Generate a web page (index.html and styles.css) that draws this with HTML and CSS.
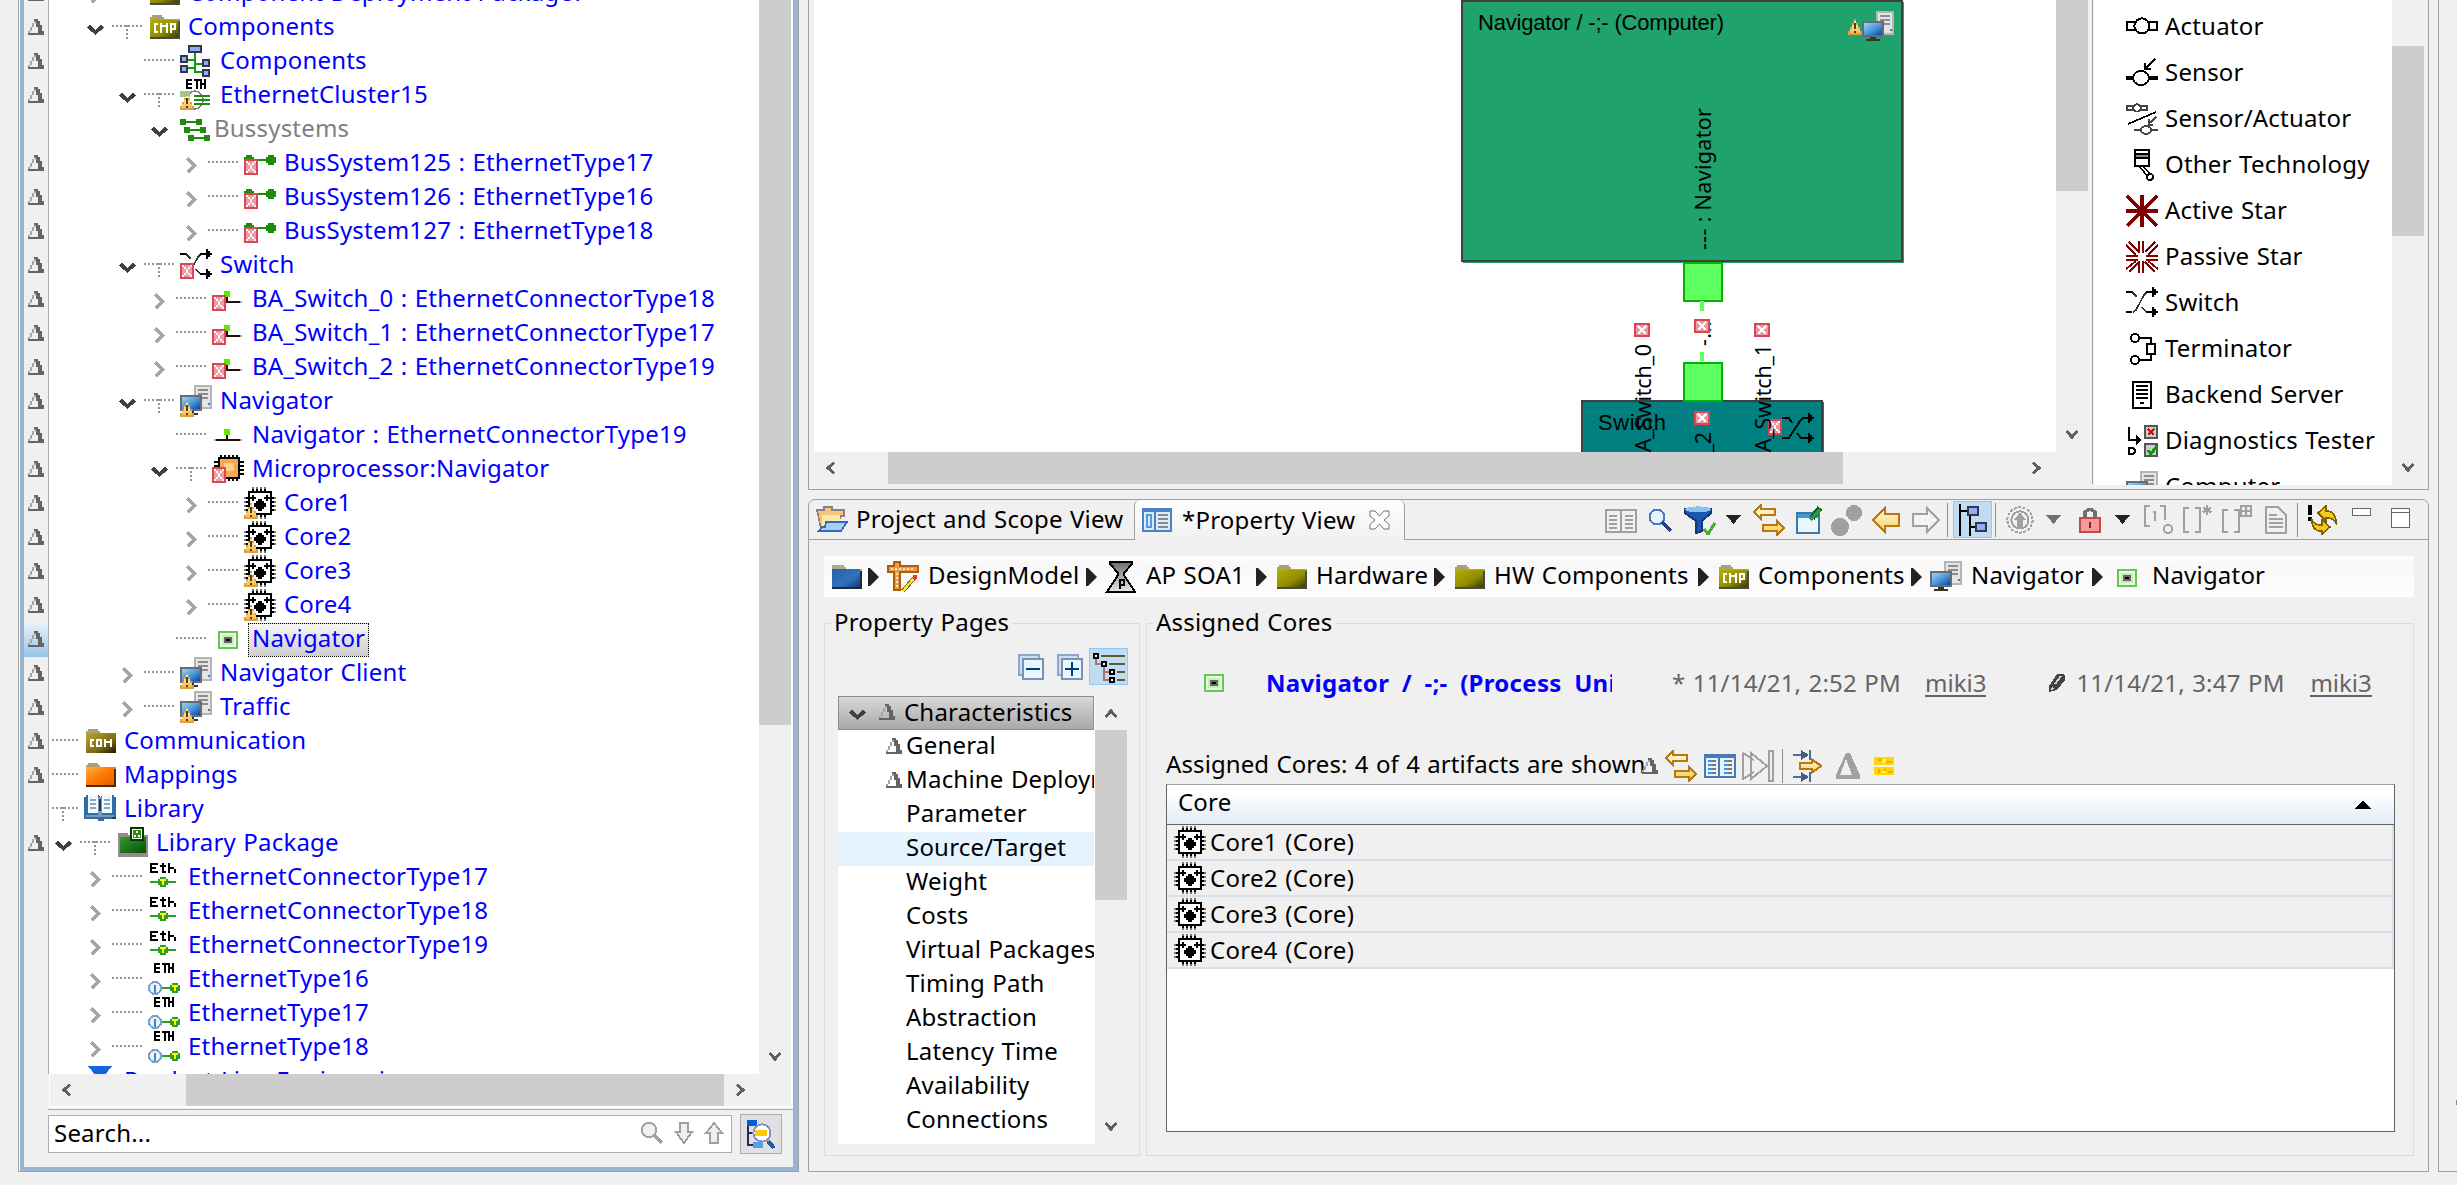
FILE: index.html
```html
<!DOCTYPE html>
<html lang="en">
<head>
<meta charset="utf-8">
<title>Property View</title>
<link rel="stylesheet" href="styles.css">
</head>
<body>
<svg class="sprite" width="0" height="0" aria-hidden="true">
  <defs>
    <linearGradient id="g-olive" x2="1" y2="1"><stop offset="0" stop-color="#b4b000"/><stop offset=".6" stop-color="#8f8c00"/><stop offset="1" stop-color="#3c3a00"/></linearGradient>
    <linearGradient id="g-khaki" x2="1" y2="1"><stop offset="0" stop-color="#bfa52c"/><stop offset=".6" stop-color="#7f6c14"/><stop offset="1" stop-color="#1c1600"/></linearGradient>
    <linearGradient id="g-orange" x2="1" y2="1"><stop offset="0" stop-color="#ffb347"/><stop offset=".5" stop-color="#ff7a00"/><stop offset="1" stop-color="#e06000"/></linearGradient>
    <linearGradient id="g-green" x2="1" y2="1"><stop offset="0" stop-color="#2f9e2f"/><stop offset="1" stop-color="#045004"/></linearGradient>
    <linearGradient id="g-blue" x2="1" y2="1"><stop offset="0" stop-color="#2a5fa4"/><stop offset=".6" stop-color="#2f74bd"/><stop offset="1" stop-color="#103a70"/></linearGradient>
    <linearGradient id="g-screen" x2="1" y2="1"><stop offset="0" stop-color="#9fd0f2"/><stop offset=".5" stop-color="#4f9bdc"/><stop offset="1" stop-color="#0846a8"/></linearGradient>
    <linearGradient id="g-warn" x2="0" y2="1"><stop offset="0" stop-color="#fff0bc"/><stop offset="1" stop-color="#f8bc58"/></linearGradient>
    <linearGradient id="g-gold" x2="0" y2="1"><stop offset="0" stop-color="#fffbe8"/><stop offset="1" stop-color="#f5cf5c"/></linearGradient>
    <linearGradient id="g-gray" x2="0" y2="1"><stop offset="0" stop-color="#6c6c6c"/><stop offset="1" stop-color="#e8e8e8"/></linearGradient>
  </defs>
  <symbol id="error" viewBox="0 0 7 8"><path fill="#dc4553" d="M0 0h7v8H0z"/><path fill="#eb9aa1" d="M1 1h5v6H1z"/><path fill="#fff" d="M2 2h1v1H2zM4 2h1v1H4zM3 3h1v2H3zM2 5h1v1H2zM4 5h1v1H4zM1 1h1v1H1zM5 1h1v1H5zM1 6h1v1H1zM5 6h1v1H5z"/></symbol>
  <symbol id="warn" viewBox="0 0 7 8"><path fill="#dca040" d="M3 0h1v2h1v2h1v2h1v2H0V6h1V4h1V2h1z"/><path fill="url(#g-warn)" d="M3 1h1v2h1v2h1v2H1V5h1V3h1z"/><path fill="#5c3a00" d="M3 2h1v3H3zM3 6h1v1H3z"/></symbol>
  <symbol id="delta" viewBox="0 0 8 8"><path fill="#646464" d="M3 0h2v1h1v2h1v3h1v2H0V7h5V4H4V1H3z"/><path fill="#a4a4a4" d="M3 1h1v1H3zM2 2h1v2H2zM1 4h1v2H1zM0 6h1v1H0z"/></symbol>
  <symbol id="open" viewBox="0 0 17 11"><path fill="none" stroke="#404040" stroke-width="4" d="M1.500 2 8.500 8.500 15.500 2"/></symbol>
  <symbol id="closed" viewBox="0 0 11 17"><path fill="none" stroke="#a5a5a5" stroke-width="3.600" d="M1.500 1.500 8.500 8.500 1.500 15.500"/></symbol>
  <symbol id="folder" viewBox="0 0 16 16"><path fill="#a8a078" d="M2 2h5v1h1v1h8v2H1V3h1z"/><path fill="#4a4a44" d="M15 5h1v9H1v-1h14z"/><path fill="url(#g-olive)" d="M1 4.500h14V13H1z"/></symbol>
  <symbol id="cmp" viewBox="0 0 16 16"><use href="#folder"/><path fill="none" stroke="#fff" d="M5 6.500H3.500v4H5M6.500 11V6M7 7.500h2M9.500 11V6M11.500 11V6.500h2v2.500h-2"/></symbol>
  <symbol id="com" viewBox="0 0 16 16"><path fill="#a8a078" d="M2 2h5v1h1v1h8v2H1V3h1z"/><path fill="url(#g-khaki)" d="M1 4h15v10H1z"/><path fill="none" stroke="#fff" d="M5 7.500H3.500v3H5M6.500 7.500h2v3h-2zM10.500 11V7M11 8.500h2M13.500 11V7"/></symbol>
  <symbol id="mapfolder" viewBox="0 0 16 16"><path fill="#b59a72" d="M2 2h5v1h1v1h8v2H1V3h1z"/><path fill="url(#g-orange)" d="M1 4h14v9H1z"/><path fill="#4c2c00" d="M1 13h14V5h1v9H1z"/></symbol>
  <symbol id="bluefolder" viewBox="0 0 16 16"><path fill="#b0a890" d="M1 2h6v1h1v1h8v2H1z"/><path fill="url(#g-blue)" d="M1 4h14v9H1z"/><path fill="#1c2c40" d="M1 13h14V5h1v9H1z"/></symbol>
  <symbol id="package" viewBox="0 0 16 16"><path fill="#988" d="M1 3h5v1h10v11H1z"/><path fill="url(#g-green)" d="M2 5h13v8H2z"/><path fill="#063806" d="M7 0h7v7H7z"/><path fill="#fff" d="M8 1h5v5H8z"/><path fill="#2c8c10" d="M8.500 1.500h4v4h-4z"/><path fill="#fff" d="M10 2h1v1h-1zM9 4h1v1H9zM11 4h1v1h-1z"/></symbol>
  <symbol id="library" viewBox="0 0 16 16"><path fill="#2e6ea8" d="M0 2h1V1h6l1 1 1-1h6v1h1v11h-6v1H7v-1H0z"/><path fill="#f4f8fc" d="M2 1h5v9H2zM9 1h5v9H9z"/><path fill="#7c98b4" d="M7 2h2v9H7zM1 11h14v1H1z"/><path fill="#87a8c8" d="M3 3h3v1H3zM3 5h3v1H3zM3 7h3v1H3zM10 3h3v1h-3zM10 5h3v1h-3zM10 7h3v1h-3z"/><path fill="#123a66" d="M7.500 3h1v6h-1zM14 12h2v1h-2z"/></symbol>
  <symbol id="hierarchy" viewBox="0 0 16 16"><path fill="none" stroke="#139b13" d="M7.500 4v10M4 7.500h4M4 11.500h4M8 9.500h4M8 13.500h4"/><g fill="#94a8ff" stroke="#333740"><path d="M4.500.5h6v3h-6zM.5 5.500h3v3h-3zM.5 10.500h3v3h-3zM11.500 7.500h3v3h-3zM11.500 12.500h3v3h-3z"/></g></symbol>
  <symbol id="cluster" viewBox="0 0 16 16"><path fill="none" stroke="#000" d="M3.500 5V.5M3 .5h3M4 2.500h2M3 4.500h3M7 .5h3M8.500 0v5M10.500 0v5M12.500 0v5M11 2.500h1"/><ellipse cx="7.500" cy="10.500" rx="4" ry="4.500" fill="#fff" stroke="#777" stroke-width=".8"/><path fill="#9fc890" d="M0 6h5v3H0z"/><path fill="#1a8a10" d="M7 8h8v1H7zM7 10h8v1H7zM7 12h8v1H7z"/><use href="#warn" y="7.500" width="7" height="8"/></symbol>
  <symbol id="buses" viewBox="0 0 16 16"><path fill="#1e8c0a" d="M0 3h3v1h5V3h3v3H8V5H3v1H0zM2 7h3v1h5V7h3v3h-3V9H5v1H2zM4 11h3v1h5v-1h3v3h-3v-1H7v1H4z"/></symbol>
  <symbol id="bus" viewBox="0 0 16 16"><path fill="#1e8c0a" d="M1 4h3v1h1v1h6V5h1V4h3v1h1v3h-1v1h-3V8h-1V7H5v1H0V5h1z"/><use href="#error" y="6" width="7" height="8"/></symbol>
  <symbol id="switch" viewBox="0 0 16 16"><path fill="none" stroke="#333" stroke-width=".8" d="M3 2.500 5.500 5M3.500 12.500 5 11.500 9 4l1.500-1.500M8 10l2 2.500"/><path fill="none" stroke="#000" d="M0 2.500h3M10 2.500h4M0 12.500h3M10 12.500h4"/><path d="M13 0h1v1h1v1h1v1h-1v1h-1v1h-1zM13 10h1v1h1v1h1v1h-1v1h-1v1h-1z"/></symbol>
  <symbol id="switch-error" viewBox="0 0 16 16"><use href="#switch" y="0" width="16" height="16"/><use href="#error" y="7" width="7" height="8"/></symbol>
  <symbol id="connector" viewBox="0 0 16 16"><path fill="#201008" d="M2 10h12v1H2zM7 8h1v2H7z"/><path fill="#aaa" d="M1 10h1v1H1zM14 10h1v1h-1z"/><path fill="#64e600" d="M6 5h3v3H6z"/></symbol>
  <symbol id="connector-error" viewBox="0 0 16 16"><use href="#connector" y="-1" width="16" height="16"/><use href="#error" y="6" width="7" height="8"/></symbol>
  <symbol id="computer" viewBox="0 0 16 16"><path fill="#b4b4b4" d="M7 0h9v12H7z"/><path fill="#e4e4e4" d="M8 1h7v10H8z"/><path fill="#8c8c8c" d="M9 2h5v1H9zM9 4h5v1H9zM9 6h5v1H9z"/><path fill="#2a86d8" d="M14 9h1v1h-1z"/><path fill="#666c74" d="M0 5h11v8H0z"/><path fill="url(#g-screen)" d="M1 6h9v6H1z"/><path fill="#333" d="M4 13h3v1H4zM2 14h7v1H2z"/></symbol>
  <symbol id="computer-warn" viewBox="0 0 16 16"><use href="#computer" width="16" height="16"/><use href="#warn" y="8" width="7" height="8"/></symbol>
  <symbol id="micro" viewBox="0 0 16 16"><path d="M4 1h1v2H4zM6 1h1v2H6zM8 1h1v2H8zM10 1h1v2h-1zM12 1h1v2h-1zM6 12h1v2H6zM8 12h1v2H8zM10 12h1v2h-1zM12 12h1v2h-1zM1 4h15v1H1zM1 6h15v1H1zM1 8h15v1H1zM1 10h15v1H1zM3 2h11v11H3z"/><path fill="#f6a84c" d="M4 3h9v9H4z"/><path fill="#ffd08c" d="M6 5h5v4H6z"/><use href="#error" y="7" width="7" height="8"/></symbol>
  <symbol id="core" viewBox="0 0 16 16"><path fill="#777" d="M0 5h16v1H0zM0 7h16v1H0zM0 9h16v1H0zM0 11h16v1H0zM4 0h1v16H4zM6 0h1v16H6zM8 0h1v16H8zM10 0h1v16h-1z"/><path d="M1 5h14v1H1zM1 7h14v1H1zM1 9h14v1H1zM1 11h14v1H1zM4 1h1v14H4zM6 1h1v14H6zM8 1h1v14H8zM10 1h1v14h-1zM2 2h12v12H2z"/><path fill="#fff" d="M3 3h10v10H3z"/><path d="M2 5h4v1H2zM4 4h1v3H4zM10 5h4v1h-4zM11 4h1v3h-1zM7 6h2v1h1v1h1v2h-1v1H9v1H7v-1H6v-1H5V8h1V7h1z"/></symbol>
  <symbol id="core-warn" viewBox="0 0 16 16"><use href="#core" width="16" height="16"/><use href="#warn" y="8" width="7" height="8"/></symbol>
  <symbol id="process" viewBox="0 0 16 16"><path fill="#64c855" d="M3 4h10v9H3z"/><path fill="#e8ffe0" d="M4 5h8v7H4z"/><path fill="#c4eeb8" d="M5 6h6v5H5z"/><path fill="#666" d="M6 7h4v3H6z"/><path d="M7 8h2v1H7z"/></symbol>
  <symbol id="ethconn" viewBox="0 0 16 16"><path fill="none" stroke="#000" d="M5 1.500H1.500v4H5M2 3.500h2M6 2.500h3M7.500 1v4.500h1.500M10.500 1v5M11 3.500h2M13.500 4v2"/><path fill="#2c9c2c" d="M1 10h13v1H1zM6 8h3v1h1v3H9v1H6v-1H5V9h1z"/><path fill="#ff0" d="M6 9h3v1H8v2H7v-2H6z"/></symbol>
  <symbol id="ethtype" viewBox="0 0 16 16"><path fill="none" stroke="#000" d="M3.500 5V.5M3 .5h3M4 2.500h2M3 4.500h3M7 .5h3M8.500 0v5M10.500 0v5M12.500 0v5M11 2.500h1"/><ellipse cx="3.500" cy="12.500" rx="3" ry="3" fill="#e8f2fa" stroke="#78a4cc"/><path fill="#4c84b8" d="M3 11h1v4H3z"/><path fill="#2c9c2c" d="M7 12h5v1H7zM12 10h3v1h1v3h-1v1h-3v-1h-1v-3h1z"/><path fill="#ff0" d="M12 11h3v1h-1v2h-1v-2h-1z"/></symbol>
  <symbol id="arrows" viewBox="0 0 16 16"><path fill="url(#g-gold)" stroke="#b8780c" stroke-width=".9" d="M.6 4 4 .6v2h7v2.800H4v2zM15.400 12 12 8.600v2H5v2.800h7v2z"/></symbol>
  <symbol id="table" viewBox="0 0 16 16"><path fill="#4c78b8" d="M0 2h16v12H0z"/><path fill="#e8f2fb" d="M1 4h6v9H1zM8 4h7v9H8z"/><path fill="#3c92e8" d="M2 5h2v1H2zM2 7h2v1H2zM2 9h2v1H2zM2 11h2v1H2zM10 5h2v1h-2zM10 7h2v1h-2zM10 9h2v1h-2zM10 11h2v1h-2z"/><path fill="#777" d="M4 5h2v1H4zM4 7h2v1H4zM4 9h2v1H4zM4 11h2v1H4zM12 5h2v1h-2zM12 7h2v1h-2zM12 9h2v1h-2zM12 11h2v1h-2z"/></symbol>
  <symbol id="tri" viewBox="0 0 15 9"><path d="M0 0h15L7.500 9z" fill="currentColor"/></symbol>
  <symbol id="crumb" viewBox="0 0 11 18"><path fill="#222" d="M0 0h2l9 9-9 9H0z"/></symbol>
  <symbol id="s-left" viewBox="0 0 9 12"><path fill="none" stroke="#606060" stroke-width="3" d="M8 .5 2 6l6 5.500"/></symbol>
  <symbol id="s-right" viewBox="0 0 9 12"><path fill="none" stroke="#606060" stroke-width="3" d="M1 .5 7 6l-6 5.500"/></symbol>
  <symbol id="s-down" viewBox="0 0 12 9"><path fill="none" stroke="#606060" stroke-width="3" d="M.5 1 6 7l5.500-6"/></symbol>
  <symbol id="s-up" viewBox="0 0 12 9"><path fill="none" stroke="#606060" stroke-width="3" d="M.5 8 6 2l5.500 6"/></symbol>
</svg>

<div class="workbench">
  <section class="navigator">
    <div class="treeframe">
      <ul class="tree">
        <li class="row l2"><svg class="mark"><use href="#delta"/></svg><svg class="chev shut"><use href="#closed"/></svg><i class="dots"></i><svg class="ico"><use href="#folder"/></svg><span>Component Deployment Package7</span></li>
        <li class="row l2"><svg class="mark"><use href="#delta"/></svg><svg class="chev"><use href="#open"/></svg><i class="dots tee"></i><svg class="ico"><use href="#cmp"/></svg><span>Components</span></li>
        <li class="row l3"><svg class="mark"><use href="#delta"/></svg><svg class="chev"></svg><i class="dots"></i><svg class="ico"><use href="#hierarchy"/></svg><span>Components</span></li>
        <li class="row l3"><svg class="mark"><use href="#delta"/></svg><svg class="chev"><use href="#open"/></svg><i class="dots tee"></i><svg class="ico"><use href="#cluster"/></svg><span>EthernetCluster15</span></li>
        <li class="row l4 group"><svg class="mark"></svg><svg class="chev"><use href="#open"/></svg><svg class="ico"><use href="#buses"/></svg><span>Bussystems</span></li>
        <li class="row l5"><svg class="mark"><use href="#delta"/></svg><svg class="chev shut"><use href="#closed"/></svg><i class="dots"></i><svg class="ico"><use href="#bus"/></svg><span>BusSystem125 : EthernetType17</span></li>
        <li class="row l5"><svg class="mark"><use href="#delta"/></svg><svg class="chev shut"><use href="#closed"/></svg><i class="dots"></i><svg class="ico"><use href="#bus"/></svg><span>BusSystem126 : EthernetType16</span></li>
        <li class="row l5"><svg class="mark"><use href="#delta"/></svg><svg class="chev shut"><use href="#closed"/></svg><i class="dots"></i><svg class="ico"><use href="#bus"/></svg><span>BusSystem127 : EthernetType18</span></li>
        <li class="row l3"><svg class="mark"><use href="#delta"/></svg><svg class="chev"><use href="#open"/></svg><i class="dots tee"></i><svg class="ico"><use href="#switch-error"/></svg><span>Switch</span></li>
        <li class="row l4"><svg class="mark"><use href="#delta"/></svg><svg class="chev shut"><use href="#closed"/></svg><i class="dots"></i><svg class="ico"><use href="#connector-error"/></svg><span>BA_Switch_0 : EthernetConnectorType18</span></li>
        <li class="row l4"><svg class="mark"><use href="#delta"/></svg><svg class="chev shut"><use href="#closed"/></svg><i class="dots"></i><svg class="ico"><use href="#connector-error"/></svg><span>BA_Switch_1 : EthernetConnectorType17</span></li>
        <li class="row l4"><svg class="mark"><use href="#delta"/></svg><svg class="chev shut"><use href="#closed"/></svg><i class="dots"></i><svg class="ico"><use href="#connector-error"/></svg><span>BA_Switch_2 : EthernetConnectorType19</span></li>
        <li class="row l3"><svg class="mark"><use href="#delta"/></svg><svg class="chev"><use href="#open"/></svg><i class="dots tee"></i><svg class="ico"><use href="#computer-warn"/></svg><span>Navigator</span></li>
        <li class="row l4"><svg class="mark"><use href="#delta"/></svg><svg class="chev"></svg><i class="dots"></i><svg class="ico"><use href="#connector"/></svg><span>Navigator : EthernetConnectorType19</span></li>
        <li class="row l4"><svg class="mark"><use href="#delta"/></svg><svg class="chev"><use href="#open"/></svg><i class="dots tee"></i><svg class="ico"><use href="#micro"/></svg><span>Microprocessor:Navigator</span></li>
        <li class="row l5"><svg class="mark"><use href="#delta"/></svg><svg class="chev shut"><use href="#closed"/></svg><i class="dots"></i><svg class="ico"><use href="#core-warn"/></svg><span>Core1</span></li>
        <li class="row l5"><svg class="mark"><use href="#delta"/></svg><svg class="chev shut"><use href="#closed"/></svg><i class="dots"></i><svg class="ico"><use href="#core-warn"/></svg><span>Core2</span></li>
        <li class="row l5"><svg class="mark"><use href="#delta"/></svg><svg class="chev shut"><use href="#closed"/></svg><i class="dots"></i><svg class="ico"><use href="#core-warn"/></svg><span>Core3</span></li>
        <li class="row l5"><svg class="mark"><use href="#delta"/></svg><svg class="chev shut"><use href="#closed"/></svg><i class="dots"></i><svg class="ico"><use href="#core-warn"/></svg><span>Core4</span></li>
        <li class="row l4 selected"><svg class="mark"><use href="#delta"/></svg><svg class="chev"></svg><i class="dots"></i><svg class="ico"><use href="#process"/></svg><span>Navigator</span></li>
        <li class="row l3"><svg class="mark"><use href="#delta"/></svg><svg class="chev shut"><use href="#closed"/></svg><i class="dots"></i><svg class="ico"><use href="#computer-warn"/></svg><span>Navigator Client</span></li>
        <li class="row l3"><svg class="mark"><use href="#delta"/></svg><svg class="chev shut"><use href="#closed"/></svg><i class="dots"></i><svg class="ico"><use href="#computer-warn"/></svg><span>Traffic</span></li>
        <li class="row l0"><svg class="mark"><use href="#delta"/></svg><i class="dots"></i><svg class="ico"><use href="#com"/></svg><span>Communication</span></li>
        <li class="row l0"><svg class="mark"><use href="#delta"/></svg><i class="dots"></i><svg class="ico"><use href="#mapfolder"/></svg><span>Mappings</span></li>
        <li class="row l0"><svg class="mark"></svg><i class="dots tee"></i><svg class="ico"><use href="#library"/></svg><span>Library</span></li>
        <li class="row l1"><svg class="mark"><use href="#delta"/></svg><svg class="chev"><use href="#open"/></svg><i class="dots tee"></i><svg class="ico"><use href="#package"/></svg><span>Library Package</span></li>
        <li class="row l2"><svg class="mark"></svg><svg class="chev shut"><use href="#closed"/></svg><i class="dots"></i><svg class="ico"><use href="#ethconn"/></svg><span>EthernetConnectorType17</span></li>
        <li class="row l2"><svg class="mark"></svg><svg class="chev shut"><use href="#closed"/></svg><i class="dots"></i><svg class="ico"><use href="#ethconn"/></svg><span>EthernetConnectorType18</span></li>
        <li class="row l2"><svg class="mark"></svg><svg class="chev shut"><use href="#closed"/></svg><i class="dots"></i><svg class="ico"><use href="#ethconn"/></svg><span>EthernetConnectorType19</span></li>
        <li class="row l2"><svg class="mark"></svg><svg class="chev shut"><use href="#closed"/></svg><i class="dots"></i><svg class="ico"><use href="#ethtype"/></svg><span>EthernetType16</span></li>
        <li class="row l2"><svg class="mark"></svg><svg class="chev shut"><use href="#closed"/></svg><i class="dots"></i><svg class="ico"><use href="#ethtype"/></svg><span>EthernetType17</span></li>
        <li class="row l2"><svg class="mark"></svg><svg class="chev shut"><use href="#closed"/></svg><i class="dots"></i><svg class="ico"><use href="#ethtype"/></svg><span>EthernetType18</span></li>
        <li class="row l0"><svg class="mark"></svg><i class="dots blank"></i><svg class="ico" viewBox="0 0 16 16"><path fill="#1464e0" d="M2 .5h12L8 8z"/></svg><span>Product Line Engineering</span></li>
      </ul>
      <div class="vbar tree-v"><div class="thumb"></div><svg class="sa-v"><use href="#s-down"/></svg></div>
      <div class="hbar tree-h"><svg class="sa-h"><use href="#s-left"/></svg><div class="thumb"></div><svg class="sa-h"><use href="#s-right"/></svg></div>
    </div>
    <div class="searchrow">
      <div class="searchbox"><span>Search...</span>
        <svg width="24" height="24" viewBox="0 0 12 12" fill="#f0f0f0" stroke="#a0a0a0"><circle cx="4.500" cy="4.500" r="3.600"/><path stroke-width="1.800" d="M7.500 7.500 11 11"/></svg>
        <svg width="20" height="24" viewBox="0 0 10 12" fill="#f0f0f0" stroke="#a0a0a0"><path d="M3 1h4v4.500h2L5 11 1 5.500h2z"/></svg>
        <svg width="20" height="24" viewBox="0 0 10 12" fill="#f0f0f0" stroke="#a0a0a0"><path d="M3 11h4V6h2L5 1 1 6h2z"/></svg>
      </div>
      <div class="searchbtn"><svg width="30" height="32" viewBox="0 0 15 16"><path fill="#0060d0" d="M0 1h5v3H0z"/><path fill="none" stroke="#282860" d="M.5 4v9.500H4M0 7.500h3"/><path fill="#5a9ce8" d="M3 12h5v3H3z"/><circle cx="7.500" cy="7.500" r="4.300" fill="#fff" stroke="#8890c0"/><path fill="#ffc800" d="M4 6h6v3H4z"/><path stroke="#28589c" stroke-width="2" d="m10.500 11.500 3 3.500"/></svg></div>
    </div>
  </section>

  <div class="middle">
    <section class="editor">
      <div class="canvas-col">
        <div class="canvas-row">
          <svg class="canvas" viewBox="814 0 1242 452" width="1242" height="452">
            <path fill="#1fa06c" d="M1463 2h441v261h-441z"/>
            <rect x="1462" y="1" width="440" height="260" fill="#1fa26c" stroke="#404040" stroke-width="2"/>
            <text class="dia" x="1478" y="30" textLength="246" lengthAdjust="spacing">Navigator / -;- (Computer)</text>
            <use href="#warn" x="1848" y="19" width="14" height="16"/>
            <use href="#computer" x="1862" y="11" width="32" height="32"/>
            <text class="vert" transform="translate(1711 250) rotate(-90)" textLength="142">--- : Navigator</text>
            <rect x="1684" y="263" width="38" height="38" fill="#60ff60" stroke="#00b400" stroke-width="2"/>
            <path fill="#60ff60" d="M1700 301h4v10h-4zM1700 352h4v9h-4z"/>
            <path fill="#008080" d="M1583 402h241v60h-241z"/>
            <rect x="1582" y="401" width="240" height="70" fill="#008080" stroke="#404040" stroke-width="2"/>
            <rect x="1684" y="363" width="38" height="38" fill="#60ff60" stroke="#00b400" stroke-width="2"/>
            <text class="dia" x="1598" y="430" textLength="68" lengthAdjust="spacing">Switch</text>
            <text class="vert" transform="translate(1711 346) rotate(-90)" textLength="25">-...</text>
            <text class="vert" text-anchor="end" transform="translate(1651 344) rotate(-90)" textLength="122">BA_Switch_0</text>
            <text class="vert" text-anchor="end" transform="translate(1711 432) rotate(-90)" textLength="122">BA_Switch_2</text>
            <use href="#error" x="1768" y="419" width="14" height="16"/>
            <text class="vert" text-anchor="end" transform="translate(1771 344) rotate(-90)" textLength="122">BA_Switch_1</text>
            <g id="errs"><svg x="1634" y="323" width="16" height="14" viewBox="0 0 8 7"><path fill="#dc4553" d="M0 0h8v7H0z"/><path fill="#eb9aa1" d="M1 1h6v5H1z"/><path fill="none" stroke="#fff" d="m2 1.500 4 4M6 1.500l-4 4"/></svg></g>
            <use href="#errs" x="60" y="-4"/><use href="#errs" x="120"/><use href="#errs" x="60" y="88"/>
            <svg x="1782" y="413" width="32" height="32" viewBox="0 0 16 16"><path fill="none" stroke="#000" d="M0 2.500h3.500L5 5M0 12.500h3.500L9 4l1.500-1.500H14M7.500 10l2 2.500H14"/><path d="M13 0h1v1h1v1h1v1h-1v1h-1v1h-1zM13 10h1v1h1v1h1v1h-1v1h-1v1h-1z"/></svg>
          </svg>
          <div class="vbar canvas-v"><div class="thumb"></div><svg class="sa-v"><use href="#s-down"/></svg></div>
        </div>
        <div class="hbar canvas-h"><svg class="sa-h"><use href="#s-left"/></svg><div class="thumb"></div><svg class="sa-h"><use href="#s-right"/></svg></div>
      </div>
      <div class="palette">
        <ul>
          <li><svg viewBox="0 0 16 16" fill="#fff" stroke="#000"><path d="M.5 5.500h4v4h-4zM11.500 5.500h4v4h-4z"/><circle cx="8" cy="7.500" r="3.800"/></svg><span>Actuator</span></li>
          <li><svg viewBox="0 0 16 16" fill="#fff" stroke="#000"><path stroke-width="2" d="M0 10.500h4M12 10.500h4"/><ellipse cx="7.500" cy="10.500" rx="4" ry="3.500"/><path fill="none" d="M14.500 1 10 5.500M9.500 3v3h3"/></svg><span>Sensor</span></li>
          <li><svg viewBox="0 0 16 16" fill="#fff" stroke="#444"><path d="M.5 1.500h3v2h-3zM7.500 1.500h3v2h-3z"/><circle cx="5.500" cy="2.500" r="1.800"/><path stroke="#000" stroke-width=".8" d="M1 10.500 15 4.500"/><path stroke-width=".8" d="M4 13.500h12M15 7l-3 3M11.500 8v3h2"/><ellipse cx="10" cy="13.500" rx="2.500" ry="1.900"/></svg><span>Sensor/Actuator</span></li>
          <li><svg viewBox="0 0 16 16" fill="#fff" stroke="#000"><path d="M4.500.5h7v8h-7z"/><path d="M5 2.500h6"/><path stroke="#888" d="M5 3.500h6"/><path d="M5 4.500h6M7 9l4 5M9 9l3.500 4" stroke-width=".8"/><circle cx="12" cy="14" r="1.500"/></svg><span>Other Technology</span></li>
          <li><svg viewBox="0 0 16 16"><path stroke="#800000" stroke-width="2" d="M8 0v16M0 8h16M.5.5l15 15M15.500.5l-15 15"/><circle cx="8" cy="8" r="3" fill="#800000"/></svg><span>Active Star</span></li>
          <li><svg viewBox="0 0 16 16"><path stroke="#800000" stroke-width=".9" d="M6.500 0v6M8.500 0v6M6.500 10v6M8.500 10v6M0 7.500h6M0 9.500h6M10 7.500h6M10 9.500h6M0 2l5 5M1.500.5l5 5M16 2l-5 5M14.500.5l-5 5M0 14l5-4M1.500 15.500l5-5M16 14l-5-4M14.500 15.500l-5-5"/></svg><span>Passive Star</span></li>
          <li><svg><use href="#switch"/></svg><span>Switch</span></li>
          <li><svg viewBox="0 0 16 16" fill="none" stroke="#000"><circle cx="4.500" cy="2.500" r="2"/><circle cx="4.500" cy="13.500" r="2"/><path d="M7 2.500h5.500v3M7 13.500h5.500v-3M10.500 5.500h4v5h-4z"/></svg><span>Terminator</span></li>
          <li><svg viewBox="0 0 16 16" fill="none" stroke="#000"><path d="M3.500 1.500h9v13h-9zM5 3.500h6M5 5.500h6M5 7.500h6M5 9.500h6M7 12h2"/></svg><span>Backend Server</span></li>
          <li><svg viewBox="0 0 16 16" fill="none" stroke="#000"><path d="M1.500 1v6.500H6M1.500 11.500h2l1 1v1l-1 1h-2z"/><path fill="#000" stroke="none" d="M5 5l3 2.500L5 10z"/><path fill="#ccc" stroke="#555" d="M9.500.5h6v6h-6zM9.500 9.500h6v6h-6z"/><path stroke="#d01010" d="m11 2 3 3M14 2l-3 3"/><path stroke="#00a000" stroke-width="1.500" d="m11 12.500 1.500 2 3-4"/></svg><span>Diagnostics Tester</span></li>
          <li><svg><use href="#computer"/></svg><span>Computer</span></li>
        </ul>
        <div class="vbar palette-v"><div class="thumb"></div><svg class="sa-v"><use href="#s-down"/></svg></div>
      </div>
    </section>

    <section class="properties">
      <header class="tabs">
        <div class="tab"><svg width="32" height="30" viewBox="0 0 16 15"><path fill="#f0c878" stroke="#8c7c8c" stroke-width=".8" d="M.5 2.500H4V1h4v1.500h6v3h-1.500L10 12H2.500z"/><path fill="#ffe9a8" d="M3 5h9v4H5l-2 3z"/><path fill="#a4d0f8" stroke="#3468b8" stroke-width=".9" d="M5 8.500h10.500L12.500 13H1.500l1.500-2h1.500z"/></svg><span>Project and Scope View</span></div>
        <div class="tab active"><svg width="30" height="24" viewBox="0 0 15 12"><path fill="#4c80c8" d="M0 0h15v12H0z"/><path fill="#d8ecfc" d="M1 2h5v9H1zM7 2h7v9H7z"/><path fill="none" stroke="#5c96d8" d="M2.500 3.500h2v6h-2z"/><path fill="#888" d="M8 3h5v1H8zM8 5h5v1H8zM8 7h5v1H8zM8 9h5v1H8z"/></svg><span>*Property View</span><svg class="x" width="21" height="20" viewBox="0 0 21 20"><path fill="#fff" stroke="#707070" d="M1 1h5l4.500 5L15 1h5v5l-5 4 5 4.500V19h-5l-4.500-5L6 19H1v-4.500L6 10 1 6z"/></svg></div>
        <div class="tools">
          <svg class="t-grid" viewBox="0 0 16 12" fill="none" stroke="#a0a0a0"><path d="M.5.5h15v11H.5zM8 1v11M2 3.500h4M2 5.500h4M2 7.500h4M2 9.500h4M10 3.500h4M10 5.500h4M10 7.500h4M10 9.500h4"/></svg>
          <svg class="t-find" viewBox="0 0 12 12"><circle cx="4.500" cy="4.500" r="3.700" fill="#e4f4ff" stroke="#4c7cc0"/><path stroke="#2c3c80" stroke-width="2" d="M7 7l4.500 4.500"/></svg>
          <svg class="t-filter" viewBox="0 0 16 15"><path fill="#1c56b4" stroke="#143878" d="M.5 2h13v2L9 8v5l-3 1V8L.5 4z"/><ellipse cx="7" cy="2.200" rx="6.500" ry="1.500" fill="#8cc0f0"/><path fill="none" stroke="#48b030" stroke-width="1.600" d="m10 12 2 2.500L15.500 9"/></svg>
          <svg class="t-drop"><use href="#tri"/></svg>
          <svg class="t-swap"><use href="#arrows"/></svg>
          <svg class="t-pin" viewBox="0 0 14 14"><path fill="#e8f6ff" stroke="#3c78a8" d="M.5 3.500h11v10H.5z"/><path fill="#4898d8" d="M1 4h10v2H1z"/><path stroke="#145c20" stroke-width="3" d="M8 6l4-5"/><path stroke="#20a038" stroke-width="1.600" d="M7 7l5-5"/></svg>
          <svg class="t-blob" viewBox="0 0 16 16" fill="#a0a0a0"><circle cx="4.500" cy="11.500" r="4.500"/><circle cx="11.500" cy="4.500" r="4"/></svg>
          <svg class="t-back" viewBox="0 0 15 14"><path fill="url(#g-gold)" stroke="#b8780c" d="M.8 7 7 .8V4h7v6H7v3.200z"/></svg>
          <svg class="t-fwd" viewBox="0 0 15 14"><path fill="#f4f4f4" stroke="#a0a0a0" d="M14.200 7 8 .8V4H1v6h7v3.200z"/></svg>
          <i class="sep"></i>
          <div class="toggle"><svg width="30" height="32" viewBox="0 0 15 16"><path stroke="#000" d="M1.500 0v16M6.500 4v12M2 3.500h4M7 11.500h3"/><path fill="#94a8ff" stroke="#333740" d="M5.500 1.500h5v4h-5zM9.500 9.500h5v4h-5z"/></svg></div>
          <i class="sep s2"></i>
          <svg class="t-up" viewBox="0 0 14 14" fill="none" stroke="#a0a0a0"><circle cx="7" cy="7" r="6.300" stroke-dasharray="1.500 .7"/><circle cx="7" cy="7" r="4.300"/><path fill="#a0a0a0" d="m7 4 2 2.500H8V10H6V6.500H5z"/></svg>
          <svg class="t-drop gray"><use href="#tri"/></svg>
          <svg class="t-lock" viewBox="0 0 11 13"><path fill="none" stroke="#707070" stroke-width="1.700" d="M3 6V2.500Q5.500 0 8 2.500V6"/><path fill="#f09c9c" stroke="#c84848" d="M.5 5.500h10v7H.5z"/><path stroke="#a01818" d="M5.500 7.500v3"/></svg>
          <svg class="t-drop d3"><use href="#tri"/></svg>
          <svg class="t-b1" viewBox="0 0 16 15" fill="none" stroke="#a0a0a0"><path d="M3 .5H.5v10H3M8 .5h2.500v7M5.500 3v5M4.500 3.500h1"/><circle cx="12" cy="12" r="2"/></svg>
          <svg class="t-b2" viewBox="0 0 15 15" fill="none" stroke="#a0a0a0"><path d="M3 1.500H.5v12H3M6 1.500h2.500v12H6M12 0v5M9.800 1.200l4.400 2.600M14.200 1.200 9.800 3.800"/></svg>
          <svg class="t-b3" viewBox="0 0 15 15" fill="none" stroke="#a0a0a0"><path d="M3 2.500H.5v11H3M6 2.500h2.500v11H6M9.500.5h5v5h-5zM12 1v4M10 3h4"/></svg>
          <svg class="t-doc" viewBox="0 0 11 14" fill="none" stroke="#a0a0a0"><path d="M.5.500h6l4 4v9H.5zM2 4.500h4M2 6.500h7M2 8.500h7M2 10.500h7"/></svg>
          <i class="sep s3"></i>
          <svg class="t-sync" viewBox="0 0 15 15"><path d="M0 0h2v5H0zM0 6h2v2H0z"/><path fill="#f4c820" stroke="#806000" stroke-width=".8" d="M5 4 9 .5V3q5 0 5 6-2-3-5-2.500V8zM11 11l-4-3.500V10Q4 10.500 2 7.500q0 6 5 5.500v1.500z"/></svg>
          <i class="min"></i><i class="max"></i>
        </div>
      </header>

      <nav class="crumbs">
        <svg class="ico"><use href="#bluefolder"/></svg><svg class="ca"><use href="#crumb"/></svg>
        <svg class="ico" viewBox="0 0 16 16"><path fill="#e89c50" stroke="#b05c08" stroke-width=".9" d="M.5 2.500h3V.5h3v2h9v3h-9v9h-3v-9h-3z"/><path stroke="#fce4b8" stroke-dasharray="1 1" d="M2 4h12M5 6v8"/><path stroke="#7a7010" stroke-width="2.200" d="m8 15 6-7"/><path stroke="#f4e840" stroke-width="1.200" d="m8 15 6-7"/><path fill="#f03030" d="M13 7h2v2h-2z"/></svg><span class="w1">DesignModel</span><svg class="ca"><use href="#crumb"/></svg>
        <svg class="ico" viewBox="0 0 16 16"><path fill="url(#g-gray)" stroke="#000" d="M2.500.5h11v1L9.500 6v1l5.500 8.500H1L6.500 7V6l-4-4.500z"/><path fill="none" stroke="#000" d="M7.500 14V9.500h2v2.500H8"/></svg><span class="w2">AP SOA1</span><svg class="ca"><use href="#crumb"/></svg>
        <svg class="ico"><use href="#folder"/></svg><span class="w3">Hardware</span><svg class="ca"><use href="#crumb"/></svg>
        <svg class="ico"><use href="#folder"/></svg><span class="w4">HW Components</span><svg class="ca"><use href="#crumb"/></svg>
        <svg class="ico"><use href="#cmp"/></svg><span class="w5">Components</span><svg class="ca"><use href="#crumb"/></svg>
        <svg class="ico"><use href="#computer"/></svg><span class="w6">Navigator</span><svg class="ca"><use href="#crumb"/></svg>
        <svg class="ico"><use href="#process"/></svg><span>Navigator</span>
      </nav>

      <div class="groups">
        <fieldset class="pages">
          <legend>Property Pages</legend>
          <div class="pagetools">
            <svg width="26" height="26" viewBox="0 0 13 13"><path fill="#c8e0f4" stroke="#90a4cc" d="M.5.5h10v10H.5z"/><path fill="#e8f6ff" stroke="#7c90b0" d="M2.500 2.500h10v10h-10z"/><path stroke="#003c80" d="M4 7.500h7"/></svg>
            <svg width="26" height="26" viewBox="0 0 13 13"><path fill="#c8e0f4" stroke="#90a4cc" d="M.5.5h10v10H.5z"/><path fill="#e8f6ff" stroke="#7c90b0" d="M2.500 2.500h10v10h-10z"/><path stroke="#003c80" d="M4 7.500h7M7.500 4v7"/></svg>
            <div class="toggle"><svg width="32" height="32" viewBox="0 0 16 16"><path fill="none" stroke="#b07070" d="M1.500 3v3.500h3M5.500 7v7.500h3M6 10.500h2"/><path stroke="#5c5c30" d="M4 2.500h12M8 6.500h8M12 10.500h4M12 14.500h4"/><path fill="#fff" stroke="#000" d="M.5 1.500h2v2h-2zM4.500 5.500h2v2h-2zM8.500 9.500h2v2h-2zM8.500 13.500h2v2h-2z"/></svg></div>
          </div>
          <div class="pagelist">
            <ul>
              <li class="head"><svg class="open"><use href="#open"/></svg><svg class="d"><use href="#delta"/></svg><span>Characteristics</span></li>
              <li><svg class="d"><use href="#delta"/></svg><span>General</span></li>
              <li><svg class="d"><use href="#delta"/></svg><span>Machine Deployment</span></li>
              <li><svg class="d"></svg><span>Parameter</span></li>
              <li class="hover"><svg class="d"></svg><span>Source/Target</span></li>
              <li><svg class="d"></svg><span>Weight</span></li>
              <li><svg class="d"></svg><span>Costs</span></li>
              <li><svg class="d"></svg><span>Virtual Packages</span></li>
              <li><svg class="d"></svg><span>Timing Path</span></li>
              <li><svg class="d"></svg><span>Abstraction</span></li>
              <li><svg class="d"></svg><span>Latency Time</span></li>
              <li><svg class="d"></svg><span>Availability</span></li>
              <li><svg class="d"></svg><span>Connections</span></li>
            </ul>
            <div class="vbar pages-v"><svg class="sa-v"><use href="#s-up"/></svg><div class="thumb"></div><svg class="sa-v end"><use href="#s-down"/></svg></div>
          </div>
        </fieldset>
        <fieldset class="assigned">
          <legend>Assigned Cores</legend>
          <div class="info">
            <svg class="ico"><use href="#process"/></svg><b>Navigator / -;- (Process Unit)</b>
            <span class="stamp">* 11/14/21, 2:52 PM</span><a>miki3</a>
            <svg class="pencil" width="16" height="18" viewBox="0 0 8 9"><path fill="#444" d="M4 0h3l1 1v2L4 8 0 9V6z"/><path stroke="#ccc" d="M3 5l3-4M1 8l1-1"/></svg>
            <span class="stamp two">11/14/21, 3:47 PM</span><a>miki3</a>
          </div>
          <div class="tabletools">
            <span>Assigned Cores: 4 of 4 artifacts are shown</span>
            <svg class="d"><use href="#delta"/></svg>
            <svg class="i1"><use href="#arrows"/></svg>
            <svg class="i2"><use href="#table"/></svg>
            <svg class="i3" viewBox="0 0 16 16" fill="none" stroke="#a0a0a0"><path d="M.5 1.500v13L6 11M.5 1.500 6 5M4.500 1.500v13l8-6.500zM13.500.5h2v15h-2z"/></svg>
            <i class="sep"></i>
            <svg class="i4" viewBox="0 0 15 16"><path fill="none" stroke="#4c6c94" d="M0 2.500h5M8.500 0v5M0 13.500h5M8.500 11v5"/><path fill="#4c5c78" d="M4 0l4 2.500L4 5zM4 11l4 2.500L4 16z"/><path fill="url(#g-gold)" stroke="#b8780c" d="M3.500 6.500h6V4.800L14.200 8 9.500 11.200V9.500h-6z"/></svg>
            <svg class="i5" viewBox="0 0 12 13"><path fill="#a0a0a0" d="M5 0h2l5 11v2H0v-2z"/><path fill="#f0f0f0" d="m5 3 3 8H2z"/></svg>
            <svg class="i6" viewBox="0 0 10 9"><path fill="#ffd800" d="M0 0h10v4H0zM0 5h10v4H0z"/><path fill="#ffa000" d="M2 1h2v1H2zM6 2h3v1H6zM2 6h1v2H2zM5 6h1v1H5zM7 7h2v1H7z"/><path fill="#fff060" d="M4 1h2v2H4zM4 7h2v1H4z"/></svg>
          </div>
          <div class="table">
            <div class="th"><span>Core</span><svg width="16" height="9" viewBox="0 0 16 9"><path d="M8 0 16 9H0z"/></svg></div>
            <div class="td"><svg class="ico"><use href="#core"/></svg><span>Core1 (Core)</span></div>
            <div class="td"><svg class="ico"><use href="#core"/></svg><span>Core2 (Core)</span></div>
            <div class="td"><svg class="ico"><use href="#core"/></svg><span>Core3 (Core)</span></div>
            <div class="td"><svg class="ico"><use href="#core"/></svg><span>Core4 (Core)</span></div>
          </div>
        </fieldset>
      </div>
    </section>
  </div>
  <section class="edge"></section>
</div>
</body>
</html>
```

FILE: styles.css
```css
* { box-sizing: border-box; }
body { margin: 0; background: #f0f0f0; color: #000; font: 24px/34px "Noto Sans", "Open Sans", sans-serif; letter-spacing: .2px; word-spacing: .9px; overflow: hidden; }
ul { list-style: none; margin: 0; padding: 0; }
svg { display: block; flex: none; shape-rendering: crispEdges; }
span, b, a, legend { white-space: nowrap; }
.sprite { position: absolute; }
.workbench { display: flex; height: 1185px; width: 2457px; overflow: hidden; }

/* scrollbars */
.vbar, .hbar { background: #f0f0f0; display: flex; flex: none; }
.vbar { width: 32px; flex-direction: column; align-items: center; justify-content: space-between; }
.hbar { height: 32px; align-items: center; }
.vbar .thumb { width: 32px; background: #cdcdcd; }
.hbar .thumb { height: 32px; background: #cdcdcd; }
.sa-v { width: 12px; height: 9px; }
.sa-h { width: 9px; height: 12px; }

/* left tree */
.navigator { margin-left: 18px; width: 781px; height: 1172px; border: 1px solid #a0a0a0; border-top: 0; flex: none; display: flex; flex-direction: column; box-shadow: inset 1px 0 #fff, inset 5px 0 #99b4d1, inset -5px 0 #99b4d1, inset 0 -4px #99b4d1; padding: 0 5px 4px; }
.treeframe { height: 1109px; display: grid; grid-template-columns: 735px 34px; grid-template-rows: 1074px 35px; background: linear-gradient(#fff, #fff) 25px 0 / 744px 1108px no-repeat; border-bottom: 0; overflow: hidden; }
.tree { height: 1074px; overflow: hidden; background: linear-gradient(to right, #f0f0f0 24px, #abadb3 24px, #abadb3 25px, #fff 25px); }
.row { height: 34px; display: flex; align-items: flex-start; color: #00f; }
.row:first-child { margin-top: -23px; }
.row .mark { box-sizing: content-box; width: 16px; height: 16px; padding: 8px 4px 10px; margin-right: 1px; }
.row > span { line-height: 30px; margin-left: 8px; height: 34px; }
.row .chev { width: 17px; height: 11px; margin: 13px 6px 0 7px; }
.row .chev.shut { width: 11px; height: 17px; margin: 10px 9px 0 10px; }
.dots { flex: none; width: 30px; height: 16px; margin: 14px 6px 0 2px; background: repeating-linear-gradient(to right, #a08ba0 0 2px, transparent 2px 4px) 0 0 / 30px 2px no-repeat; }
.dots.tee { background: repeating-linear-gradient(to right, #a08ba0 0 2px, transparent 2px 4px) 0 0 / 30px 2px no-repeat, repeating-linear-gradient(to bottom, #a08ba0 0 2px, transparent 2px 4px) 14px 0 / 2px 16px no-repeat; }
.ico { width: 32px; height: 32px; }
.l1 .mark { margin-right: 0; }
.l2 .mark { margin-right: 32px; }
.l3 .mark { margin-right: 64px; }
.l4 .mark { margin-right: 96px; }
.l5 .mark { margin-right: 128px; }
.l0 .dots { margin-left: 3px; width: 26px; margin-right: 6px; background-position: 0 0, 10px 0; }
.l0 .dots.blank { background: none; }
.row.group { color: #808080; }
.group > span { margin-left: 2px; }
.row.group .chev { margin-right: 12px; }
.selected .mark { background: linear-gradient(#eaf0f6, #99c4e6); }
.selected > span { margin-left: 4px; padding: 0 3px; border: 1px dotted #000; background: linear-gradient(#f6f6f6, #cfcfcf); line-height: 28px; }
.tree-v { padding-bottom: 13px; }
.tree-v .thumb { height: 725px; }
.tree-h { grid-column: 1 / 3; margin-left: 26px; width: 741px; padding-left: 12px; }
.tree-h .thumb { width: 538px; margin: 0 12px 0 115px; }
.searchrow { display: flex; padding: 5px 11px 0 24px; height: 58px; justify-content: space-between; border-top: 0; background: linear-gradient(#abadb3, #abadb3) 24px 0 / 745px 1px no-repeat; }
.searchbox { margin-top: 1px; width: 684px; height: 38px; background: #fff; border: 1px solid #abadb3; display: flex; align-items: center; gap: 10px; padding: 0 7px 2px 5px; }
.searchbox span { flex: 1; line-height: 32px; }
.searchbtn { width: 42px; height: 40px; border: 1px solid #abadb3; background: #e0e0e0; padding: 3px 6px; }

/* middle column */
.middle { margin-left: 9px; width: 1621px; flex: none; display: flex; flex-direction: column; gap: 9px; }
.editor { height: 490px; border: 1px solid #a0a0a0; border-top: 0; display: flex; padding-left: 5px; }
.canvas-col { width: 1279px; flex: none; border-right: 1px solid #a0a0a0; height: 484px; }
.canvas-row { display: flex; height: 452px; }
.canvas { background: #fff; }
.dia { font: 22px "Liberation Sans", Arial, sans-serif; letter-spacing: 0; word-spacing: 0; }
.vert { font: 21.500px "Noto Sans", sans-serif; letter-spacing: 0; word-spacing: 0; }
.canvas-v { padding-bottom: 13px; }
.canvas-v .thumb { height: 191px; }
.canvas-h { padding-left: 12px; }
.canvas-h .thumb { width: 955px; margin: 0 189px 0 53px; }
.palette { margin-left: 1px; width: 330px; height: 485px; display: flex; overflow: hidden; }
.palette ul { width: 298px; background: #fff; padding: 4px 0 0 32px; flex: none; }
.palette li { height: 46px; display: flex; align-items: center; gap: 7px; }
.palette li svg { width: 32px; height: 32px; }
.palette li span { margin-top: -2px; }
.palette-v { padding: 46px 0 13px; }
.palette-v .thumb { height: 190px; }

/* property view */
.properties { height: 673px; border: 1px solid #a0a0a0; border-radius: 7px 7px 0 0; }
.tabs { height: 40px; display: flex; border-bottom: 1px solid #a0a0a0; }
.tab { width: 325px; height: 39px; display: flex; align-items: center; padding: 0 0 0 7px; gap: 8px; flex: none; }
.tab span { margin-top: -1px; }
.tab.active { width: 271px; height: 40px; background: linear-gradient(#fff, #f0f0f0); border: 1px solid #a0a0a0; border-width: 0 1px; border-radius: 6px 6px 0 0; gap: 10px; padding-left: 7px; }
.tab .x { margin-left: 4px; shape-rendering: auto; }
.tools { display: flex; align-items: center; margin-left: 200px; }
.tools > * { flex: none; }
.sep { width: 1px; height: 34px; background: #8c8c8c; }
.t-grid { width: 32px; height: 24px; margin-right: 11px; margin-top: 2px; }
.t-find { width: 24px; height: 24px; margin-right: 12px; }
.t-filter { width: 32px; height: 30px; margin-right: 10px; }
.t-drop { width: 15px; height: 9px; margin-right: 12px; color: #222; }
.t-swap { width: 32px; height: 32px; margin-right: 11px; }
.t-pin { width: 28px; height: 28px; margin-right: 7px; }
.t-blob { width: 32px; height: 32px; margin-right: 8px; }
.t-back { width: 30px; height: 28px; margin-right: 10px; }
.t-fwd { width: 30px; height: 28px; margin-right: 6px; }
.toggle { width: 39px; height: 37px; background: #c0dcf3; border: 1px solid #90c8f6; padding: 2px 3px; flex: none; }
.tools .toggle { margin: 0 3px 0 5px; }
.t-up { width: 28px; height: 28px; margin: 0 12px 0 10px; }
.t-drop.gray { color: #707070; margin-right: 18px; }
.t-lock { width: 22px; height: 26px; margin-right: 14px; }
.t-drop.d3 { margin-right: 14px; }
.t-b1 { width: 32px; height: 30px; margin-right: 7px; }
.t-b2 { width: 30px; height: 30px; margin-right: 9px; }
.t-b3 { width: 30px; height: 30px; margin-right: 13px; }
.t-doc { width: 22px; height: 28px; margin-right: 10px; }
.t-sync { width: 30px; height: 30px; margin: 0 14px 0 10px; }
.min { width: 19px; height: 8px; background: #fff; border: 1px solid #666; margin: -16px 20px 0 0; }
.max { width: 19px; height: 20px; background: #fff; border: 1px solid #666; box-shadow: inset 0 3px #fff, inset 0 4px #666; margin-top: -4px; }
.crumbs { margin: 16px 14px 0 15px; height: 41px; background: linear-gradient(#fff, #f8f8f8 20%, #fdfdfd); display: flex; align-items: center; padding-left: 6px; }
.crumbs .ico { margin-right: 9px; }
.crumbs span { margin-top: -4px; flex: none; }
.crumbs .ca { width: 11px; height: 18px; margin-right: 8px; shape-rendering: auto; }
.crumbs .ico:first-child { margin-right: 6px; }
.w1 { width: 158px; }
.w2 { width: 110px; }
.w3 { width: 118px; }
.w4 { width: 204px; }
.w5 { width: 153px; }
.w6 { width: 121px; }
.groups { display: flex; gap: 6px; margin: 9px 14px 0 15px; height: 549px; }
fieldset { border: 1px solid #dcdcdc; margin: 0; padding: 0; min-width: 0; height: 550px; }
legend { padding: 0 3px; margin-left: 6px; line-height: 32px; height: 34px; }
.pages { width: 316px; flex: none; }
.assigned { flex: 1; }
.pagetools { display: flex; justify-content: flex-end; align-items: center; gap: 13px; padding-right: 11px; margin-top: 8px; height: 37px; }
.pagetools .toggle { margin-left: -7px; }
.pagelist { margin: 11px 0 0 13px; display: flex; width: 289px; height: 448px; }
.pagelist ul { width: 257px; background: #fff; overflow: hidden; flex: none; }
.pagelist li { height: 34px; display: flex; padding-left: 48px; width: 256px; overflow: hidden; }
.pagelist li span { line-height: 30px; margin-left: 4px; }
.d { width: 16px; height: 16px; margin-top: 8px; }
.pagelist .head { padding-left: 10px; background: linear-gradient(#d9d9d9, #a9a9a9); border: 1px solid #8c8c8c; }
.head .open { width: 17px; height: 11px; margin: 12px 13px 0 0; }
.pagelist .head .d { margin-top: 7px; }
.pagelist .head span { margin-left: 9px; line-height: 29px; }
.hover { background: #e5f3ff; }
.pages-v { padding: 13px 0; }
.pages-v .thumb { height: 170px; margin-top: 12px; margin-bottom: auto; }
.info { display: flex; height: 34px; margin-top: 27px; padding-left: 51px; }
.info .ico { margin-top: -1px; }
.info b { color: #00f; width: 346px; margin-left: 36px; overflow: hidden; line-height: 31px; letter-spacing: .3px; word-spacing: 6px; }
.info span { color: #646464; line-height: 31px; margin-left: 60px; width: 253px; }
.info a { color: #646464; line-height: 31px; height: 30px; border-bottom: 2px solid #646464; letter-spacing: 0; }
.info .pencil { margin: 7px 0 0 63px; }
.info .two { margin-left: 11px; width: 234px; }
.tabletools { display: flex; align-items: center; margin: 48px 0 0 19px; height: 34px; }
.tabletools span { width: 476px; margin-top: -4px; letter-spacing: .1px; }
.tabletools .d { margin: 0 7px 0 0; }
.i1, .i2, .i3 { width: 32px; height: 32px; }
.i1 { margin-right: 7px; } .i2 { margin-right: 6px; } .i3 { margin-right: 8px; }
.i4 { width: 30px; height: 32px; margin: 0 13px 0 10px; }
.i5 { width: 24px; height: 26px; margin-right: 14px; }
.i6 { width: 20px; height: 18px; }
.table { margin: 1px 0 0 19px; width: 1229px; height: 348px; background: #fff; border: 1px solid #646464; border-top-color: #a0a0a0; }
.th { height: 40px; border-bottom: 1px solid #646464; background: linear-gradient(#fff 20%, #e3ebf7); display: flex; justify-content: space-between; align-items: center; padding: 0 23px 0 11px; }
.th span { margin-top: -5px; }
.td { height: 36px; background: #f0f0f0; border-bottom: 2px solid #d7dfeb; border-right: 2px solid #d7dfeb; display: flex; gap: 4px; padding: 1px 0 0 7px; }
.td span { line-height: 31px; letter-spacing: .3px; }

/* neighbouring view cut off by the window */
.edge { margin-left: 9px; width: 40px; height: 1172px; border-left: 1px solid #a0a0a0; border-bottom: 1px solid #a0a0a0; }
.edge::after { content: ""; display: block; width: 2px; height: 5px; margin: 1100px 0 0 17px; background: #888; }
```
